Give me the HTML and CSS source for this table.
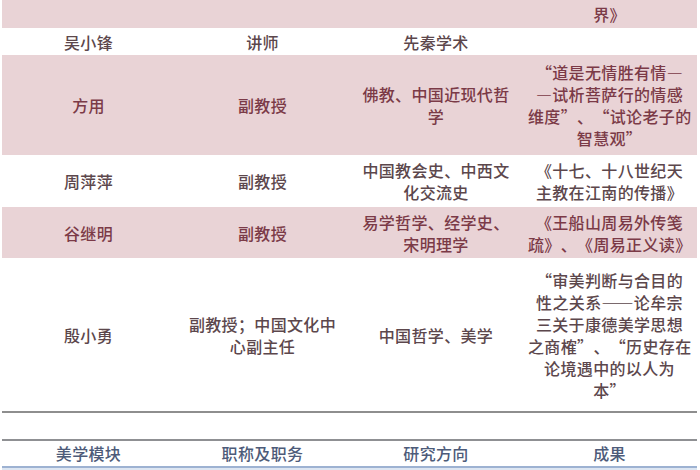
FILE: index.html
```html
<!DOCTYPE html>
<html lang="zh-CN">
<head>
<meta charset="utf-8">
<title>师资</title>
<link rel="stylesheet" href="styles.css">
</head>
<body>
<div class="page">
  <table class="faculty">
    <colgroup>
      <col class="c1"><col class="c2"><col class="c3"><col class="c4">
    </colgroup>
    <tr class="pink h-top">
      <td></td><td></td><td></td><td>界》</td>
    </tr>
    <tr class="plain h-1">
      <td>吴小锋</td><td>讲师</td><td>先秦学术</td><td></td>
    </tr>
    <tr class="pink h-4">
      <td>方用</td>
      <td>副教授</td>
      <td>佛教、中国近现代哲<br>学</td>
      <td>“道是无情胜有情—<br>—试析菩萨行的情感<br>维度”、“试论老子的<br>智慧观”</td>
    </tr>
    <tr class="plain h-2">
      <td>周萍萍</td>
      <td>副教授</td>
      <td>中国教会史、中西文<br>化交流史</td>
      <td>《十七、十八世纪天<br>主教在江南的传播》</td>
    </tr>
    <tr class="pink h-2b">
      <td>谷继明</td>
      <td>副教授</td>
      <td>易学哲学、经学史、<br>宋明理学</td>
      <td>《王船山周易外传笺<br>疏》、《周易正义读》</td>
    </tr>
    <tr class="plain h-6 last">
      <td>殷小勇</td>
      <td>副教授；中国文化中<br>心副主任</td>
      <td>中国哲学、美学</td>
      <td>“审美判断与合目的<br>性之关系——论牟宗<br>三关于康德美学思想<br>之商榷”、“历史存在<br>论境遇中的以人为<br>本”</td>
    </tr>
  </table>

  <table class="module">
    <colgroup>
      <col class="c1"><col class="c2"><col class="c3"><col class="c4">
    </colgroup>
    <thead>
      <tr>
        <th>美学模块</th><th>职称及职务</th><th>研究方向</th><th>成果</th>
      </tr>
    </thead>
    <tbody>
      <tr><td></td><td></td><td></td><td></td></tr>
    </tbody>
  </table>
</div>
</body>
</html>
```

FILE: styles.css
```css
html, body {
  margin: 0;
  padding: 0;
  background: #ffffff;
}

body {
  font-family: "Noto Sans CJK SC", "Noto Sans", sans-serif;
  font-size: 16px;
  font-weight: 500;
  letter-spacing: 0.35px;
  text-spacing-trim: space-all;
  font-feature-settings: "fwid";
  width: 700px;
  height: 470px;
  overflow: hidden;
}

.page {
  padding: 0 3px 0 2px;
}

table {
  width: 695px;
  table-layout: fixed;
  border-collapse: separate;
  border-spacing: 0;
}

.c1 { width: 173px; }
.c2 { width: 175px; }
.c3 { width: 172px; }
.c4 { width: 175px; }

.faculty td {
  padding: 0 6px;
  text-align: center;
  vertical-align: middle;
  line-height: 22px;
  white-space: nowrap;
}

.pink td {
  background: #e9d3d6;
  color: #7b3a47;
}

.plain td {
  background: #ffffff;
  color: #5c474c;
}

.h-top { height: 28px; }
.h-1 { height: 27px; }
.h-4 { height: 100px; }
.h-2 { height: 52px; }
.h-2b { height: 51px; }
.h-6 { height: 155px; }

.last td {
  border-bottom: 2px solid #8e8e8e;
}

.module {
  margin-top: 26px;
}

.module th {
  font-weight: 500;
  color: #4d5b79;
  line-height: 25px;
  padding: 0;
  text-align: center;
  border-top: 2px solid #8f9093;
  border-bottom: 2px solid #9db2d2;
}

.module td {
  height: 20px;
  background: #dde6f2;
}
```
